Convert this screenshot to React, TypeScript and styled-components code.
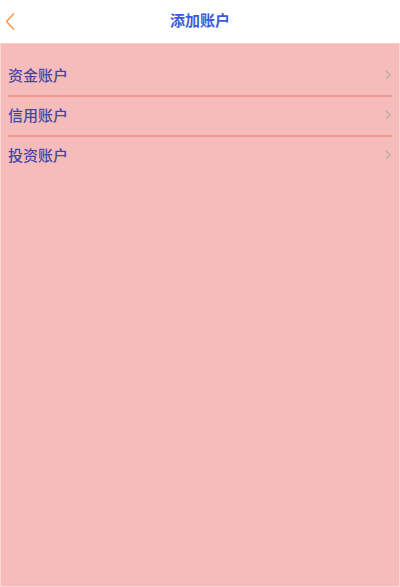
import React from "react";
import styled, { createGlobalStyle } from "styled-components";

const Global = createGlobalStyle`
  html, body { margin: 0; padding: 0; background: #ffffff; }
  body { font-family: "Noto Sans CJK SC", "Noto Sans", sans-serif; }
  * { box-sizing: border-box; }
`;

const Page = styled.div`
  width: 400px;
  height: 587px;
  display: flex;
  flex-direction: column;
  background: #ffffff;
`;

const Header = styled.header`
  height: 43px;
  flex: none;
  position: relative;
  display: flex;
  align-items: center;
  justify-content: center;
  padding-bottom: 4px;
  background: #ffffff;
`;

const BackButton = styled.button`
  position: absolute;
  left: 3px;
  top: 11px;
  width: 14px;
  height: 20px;
  padding: 0;
  border: none;
  background: transparent;
  display: flex;
  align-items: center;
  justify-content: center;
`;

const Title = styled.h1`
  margin: 0;
  font-size: 15px;
  font-weight: 700;
  color: #3b5bd9;
  letter-spacing: 0;
`;

const Panel = styled.main`
  flex: 1;
  background: #f6bcbc;
  border: 1.5px solid #fbd6d6;
  border-top: 1px solid #fad0cc;
  padding: 13px 7px 0 7px;
  display: flex;
  flex-direction: column;
`;

const Row = styled.div<{ $divider?: boolean }>`
  height: ${(p) => (p.$divider ? 40 : 38)}px;
  padding-bottom: 3px;
  display: flex;
  align-items: center;
  justify-content: space-between;
  border-bottom: ${(p) => (p.$divider ? "2px solid #f69494" : "none")};
`;

const Label = styled.span`
  font-size: 15px;
  font-weight: 500;
  color: #4646a4;
  line-height: 1;
`;

const Chevron = styled.svg`
  width: 6px;
  height: 10px;
  margin-right: 1px;
`;

const items = ["资金账户", "信用账户", "投资账户"];

export default function App() {
  return (
    <>
      <Global />
      <Page>
        <Header>
          <BackButton aria-label="返回">
            <svg width="10" height="17" viewBox="0 0 10 17">
              <polyline
                points="8.5,1 1.5,8.5 8.5,16"
                fill="none"
                stroke="#f59a52"
                strokeWidth="1.6"
                strokeLinecap="round"
                strokeLinejoin="round"
              />
            </svg>
          </BackButton>
          <Title>添加账户</Title>
        </Header>
        <Panel>
          {items.map((t, i) => (
            <Row key={t} $divider={i < items.length - 1}>
              <Label>{t}</Label>
              <Chevron viewBox="0 0 6 10">
                <polyline
                  points="1,1 5,5 1,9"
                  fill="none"
                  stroke="#b8a8aa"
                  strokeWidth="1.1"
                />
              </Chevron>
            </Row>
          ))}
        </Panel>
      </Page>
    </>
  );
}
